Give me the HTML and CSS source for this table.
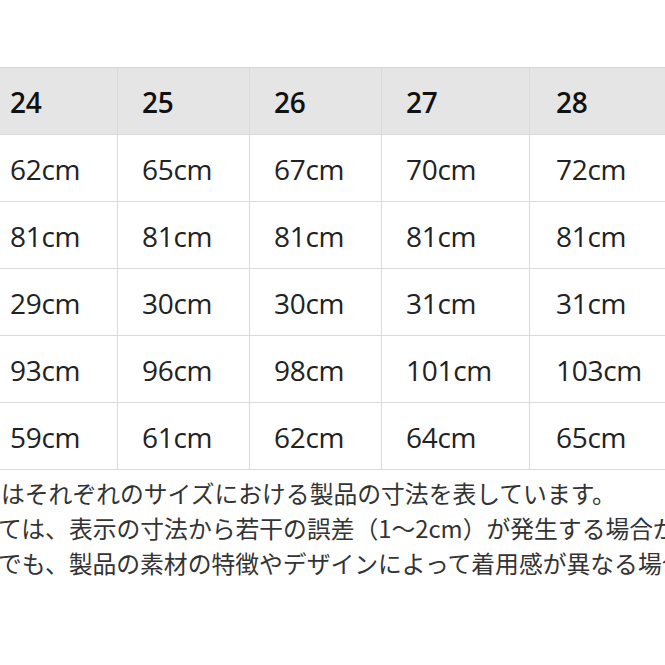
FILE: index.html
```html
<!DOCTYPE html>
<html lang="ja">
<head>
<meta charset="utf-8">
<link rel="stylesheet" href="styles.css">
</head>
<body>
<div class="page">
  <div class="size-table">
    <div class="cell head first">24</div>
    <div class="cell head">25</div>
    <div class="cell head">26</div>
    <div class="cell head">27</div>
    <div class="cell head last">28</div>

    <div class="cell first">62cm</div>
    <div class="cell">65cm</div>
    <div class="cell">67cm</div>
    <div class="cell">70cm</div>
    <div class="cell last">72cm</div>

    <div class="cell first">81cm</div>
    <div class="cell">81cm</div>
    <div class="cell">81cm</div>
    <div class="cell">81cm</div>
    <div class="cell last">81cm</div>

    <div class="cell first">29cm</div>
    <div class="cell">30cm</div>
    <div class="cell">30cm</div>
    <div class="cell">31cm</div>
    <div class="cell last">31cm</div>

    <div class="cell first">93cm</div>
    <div class="cell">96cm</div>
    <div class="cell">98cm</div>
    <div class="cell">101cm</div>
    <div class="cell last">103cm</div>

    <div class="cell first">59cm</div>
    <div class="cell">61cm</div>
    <div class="cell">62cm</div>
    <div class="cell">64cm</div>
    <div class="cell last">65cm</div>
  </div>
  <div class="notes">
    <p class="note n1">はそれぞれのサイズにおける製品の寸法を表しています。</p>
    <p class="note n2">ては、表示の寸法から若干の誤差（1〜2cm）が発生する場合があります。</p>
    <p class="note n3">でも、製品の素材の特徴やデザインによって着用感が異なる場合があります。</p>
  </div>
</div>
</body>
</html>
```

FILE: styles.css
```css
html, body {
  margin: 0;
  padding: 0;
  background: #ffffff;
}

.page {
  width: 665px;
  height: 665px;
  overflow: hidden;
  padding-top: 67px;
  box-sizing: border-box;
  font-family: "Open Sans", "Noto Sans CJK JP", sans-serif;
}

.size-table {
  display: grid;
  grid-template-columns: 118px 132px 132px 148px 220px;
  grid-auto-rows: 67px;
  width: 750px;
  border-top: 1px solid #d6d6d6;
}

.cell {
  box-sizing: border-box;
  display: flex;
  align-items: center;
  padding-left: 24px;
  padding-top: 2px;
  border-right: 1px solid #dadada;
  border-bottom: 1px solid #dadada;
  font-size: 28px;
  letter-spacing: -0.3px;
  color: #222222;
  background: #ffffff;
}

.cell.first {
  padding-left: 10px;
}

.cell.last {
  padding-left: 26px;
}

.cell.head {
  background: #e5e5e5;
  color: #111111;
  font-weight: 600;
}

.notes {
  padding-top: 5px;
}

.note {
  margin: 0;
  height: 35px;
  line-height: 35px;
  white-space: nowrap;
  overflow: hidden;
  font-family: "Noto Sans CJK JP", sans-serif;
  font-size: 23.8px;
  color: #333333;
}

.note.n1 {
  padding-left: 1px;
}

.note.n2,
.note.n3 {
  margin-left: -2px;
}
```
